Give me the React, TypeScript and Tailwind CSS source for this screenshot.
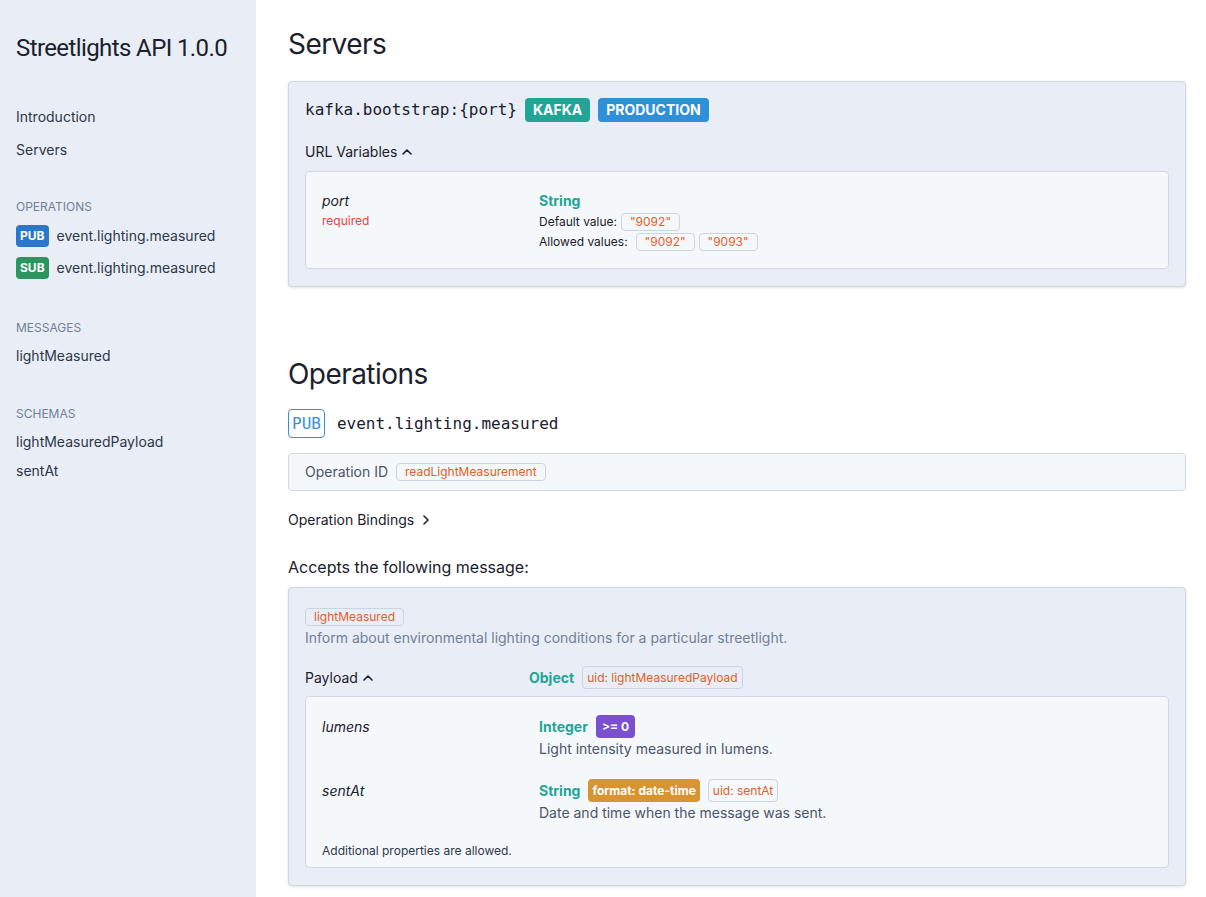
const sans = { fontFamily: "Inter, 'Noto Sans', sans-serif" };

function Tag({ children }: { children: React.ReactNode }) {
  return (
    <span className="inline-block rounded border border-[#cbd5e0] px-2 text-xs leading-4 text-[#e0602a]">
      {children}
    </span>
  );
}

function BigTag({ children }: { children: React.ReactNode }) {
  return (
    <span className="inline-block rounded border border-[#cbd5e0] px-1 text-xs leading-[21px] text-[#e0602a]">
      {children}
    </span>
  );
}

function ChevronUp() {
  return (
    <svg width="12" height="12" viewBox="0 0 12 12" className="ml-1 inline-block">
      <path d="M2 8l4-4 4 4" fill="none" stroke="#1a202c" strokeWidth="1.6" strokeLinecap="round" strokeLinejoin="round" />
    </svg>
  );
}

function ChevronRight() {
  return (
    <svg width="12" height="12" viewBox="0 0 12 12" className="ml-1.5 inline-block">
      <path d="M4 2l4 4-4 4" fill="none" stroke="#1a202c" strokeWidth="1.6" strokeLinecap="round" strokeLinejoin="round" />
    </svg>
  );
}

function Sidebar() {
  return (
    <aside className="w-[256px] shrink-0 bg-[#e9eef6] px-4 pt-[31px]">
      <h1 className="whitespace-nowrap font-['Roboto',sans-serif] text-[24px] leading-[34px] tracking-[-0.025em] text-[#1a202c]">
        Streetlights API 1.0.0
      </h1>
      <ul className="mt-[42px] space-y-[13px] text-sm leading-5 text-[#2d3748]">
        <li>Introduction</li>
        <li>Servers</li>
      </ul>
      <div className="mt-[39px] text-xs uppercase leading-4 text-[#718096]">Operations</div>
      <ul className="mt-[10px] space-y-[10px] text-sm text-[#2d3748]">
        <li className="flex items-center gap-[8px]">
          <span className="rounded bg-[#2c77c9] px-[4px] py-[3px] text-xs font-bold leading-4 text-white">PUB</span>
          event.lighting.measured
        </li>
        <li className="flex items-center gap-[8px]">
          <span className="rounded bg-[#2c945f] px-[4px] py-[3px] text-xs font-bold leading-4 text-white">SUB</span>
          event.lighting.measured
        </li>
      </ul>
      <div className="mt-[41px] text-xs uppercase leading-4 text-[#718096]">Messages</div>
      <ul className="mt-[10px] text-sm leading-5 text-[#2d3748]">
        <li>lightMeasured</li>
      </ul>
      <div className="mt-[40px] text-xs uppercase leading-4 text-[#718096]">Schemas</div>
      <ul className="mt-[10px] space-y-[9px] text-sm leading-5 text-[#2d3748]">
        <li>lightMeasuredPayload</li>
        <li>sentAt</li>
      </ul>
    </aside>
  );
}

function Servers() {
  return (
    <section>
      <h2 className="text-[28px] leading-[36px] tracking-[-0.02em] text-[#1a202c]">Servers</h2>
      <div className="mt-[19px] rounded border border-[#cfd8e3] bg-[#e9eef6] px-4 pb-[17px] pt-4 shadow-[0_1px_3px_rgba(0,0,0,0.12)]">
        <div className="flex items-center gap-2">
          <span className="font-['DejaVu_Sans_Mono',monospace] text-[16px] text-[#1a202c]">kafka.bootstrap:{"{port}"}</span>
          <span className="rounded bg-[#22a597] px-2 py-[3px] text-sm font-bold uppercase leading-[18px] text-white">kafka</span>
          <span className="rounded bg-[#2f8fd8] px-2 py-[3px] text-sm font-bold uppercase leading-[18px] text-white">production</span>
        </div>
        <div className="mt-[20px] flex items-center text-sm leading-5 text-[#1a202c]">
          URL Variables
          <ChevronUp />
        </div>
        <div className="mt-[9px] flex rounded border border-[#cfd8e3] bg-[#f5f8fb] px-4 pb-[17px] pt-[19px]">
          <div className="w-[217px] shrink-0">
            <div className="text-sm italic leading-5 text-[#1a202c]">port</div>
            <div className="mt-[2px] text-xs leading-4 text-[#e53e3e]">required</div>
          </div>
          <div>
            <div className="text-sm font-bold leading-5 text-[#22a597]">String</div>
            <div className="mt-[2px] flex items-center gap-1 text-xs text-[#1a202c]">
              Default value: <Tag>"9092"</Tag>
            </div>
            <div className="mt-[2px] flex items-center gap-1 text-xs text-[#1a202c]">
              Allowed values: <span className="ml-1"><Tag>"9092"</Tag></span> <Tag>"9093"</Tag>
            </div>
          </div>
        </div>
      </div>
    </section>
  );
}

function Operations() {
  return (
    <section className="mt-[69px]">
      <h2 className="text-[28px] leading-[36px] tracking-[-0.02em] text-[#1a202c]">Operations</h2>
      <div className="mt-[17px] flex items-center gap-3">
        <span className="rounded border border-[#3990d6] px-[3px] font-['DejaVu_Sans_Mono',monospace] text-[16px] leading-[27px] text-[#3990d6]">PUB</span>
        <span className="font-['DejaVu_Sans_Mono',monospace] text-[16px] text-[#1a202c]">event.lighting.measured</span>
      </div>
      <div className="mt-[15px] flex items-center gap-2 rounded border border-[#cfd8e3] bg-[#f5f8fb] px-4 py-[8px] text-sm leading-5 text-[#4a5568]">
        Operation ID <Tag>readLightMeasurement</Tag>
      </div>
      <div className="mt-[19px] flex items-center text-sm leading-5 text-[#1a202c]">
        Operation Bindings
        <ChevronRight />
      </div>
      <div className="mt-[25px] text-base leading-6 text-[#1a202c]">Accepts the following message:</div>
      <div className="mt-[8px] rounded border border-[#cfd8e3] bg-[#e9eef6] px-4 pb-[17px] pt-[20px] shadow-[0_1px_3px_rgba(0,0,0,0.12)]">
        <div className="flex">
          <Tag>lightMeasured</Tag>
        </div>
        <div className="mt-[2px] text-sm leading-5 text-[#718096]">
          Inform about environmental lighting conditions for a particular streetlight.
        </div>
        <div className="mt-[18px] flex items-center">
          <div className="flex w-[224px] shrink-0 items-center text-sm leading-5 text-[#1a202c]">
            Payload
            <ChevronUp />
          </div>
          <span className="text-sm font-bold text-[#22a597]">Object</span>
          <span className="ml-2 flex">
            <BigTag>uid: lightMeasuredPayload</BigTag>
          </span>
        </div>
        <div className="mt-[7px] rounded border border-[#cfd8e3] bg-[#f5f8fb] px-4 pb-[8px] pt-[18px]">
          <div className="flex">
            <div className="w-[217px] shrink-0 text-sm italic leading-[23px] text-[#1a202c]">lumens</div>
            <div>
              <div className="flex items-center gap-2">
                <span className="text-sm font-bold leading-5 text-[#22a597]">Integer</span>
                <span className="rounded bg-[#7b4fd0] px-1.5 py-[2px] text-xs font-bold leading-[19px] text-white">&gt;= 0</span>
              </div>
              <div className="mt-[1px] text-sm leading-5 text-[#4a5568]">Light intensity measured in lumens.</div>
            </div>
          </div>
          <div className="mt-[20px] flex">
            <div className="w-[217px] shrink-0 text-sm italic leading-[23px] text-[#1a202c]">sentAt</div>
            <div>
              <div className="flex items-center gap-2">
                <span className="text-sm font-bold leading-5 text-[#22a597]">String</span>
                <span className="rounded bg-[#d99432] px-1 py-[2px] text-xs font-bold leading-[19px] text-white">format: date-time</span>
                <BigTag>uid: sentAt</BigTag>
              </div>
              <div className="mt-[1px] text-sm leading-5 text-[#4a5568]">Date and time when the message was sent.</div>
            </div>
          </div>
          <div className="mt-[20px] text-xs leading-4 text-[#2d3748]">Additional properties are allowed.</div>
        </div>
      </div>
    </section>
  );
}

export default function App() {
  return (
    <div className="flex h-[897px] overflow-hidden bg-white" style={sans}>
      <Sidebar />
      <main className="flex-1 pl-8 pr-5 pt-[26px]">
        <Servers />
        <Operations />
      </main>
    </div>
  );
}
